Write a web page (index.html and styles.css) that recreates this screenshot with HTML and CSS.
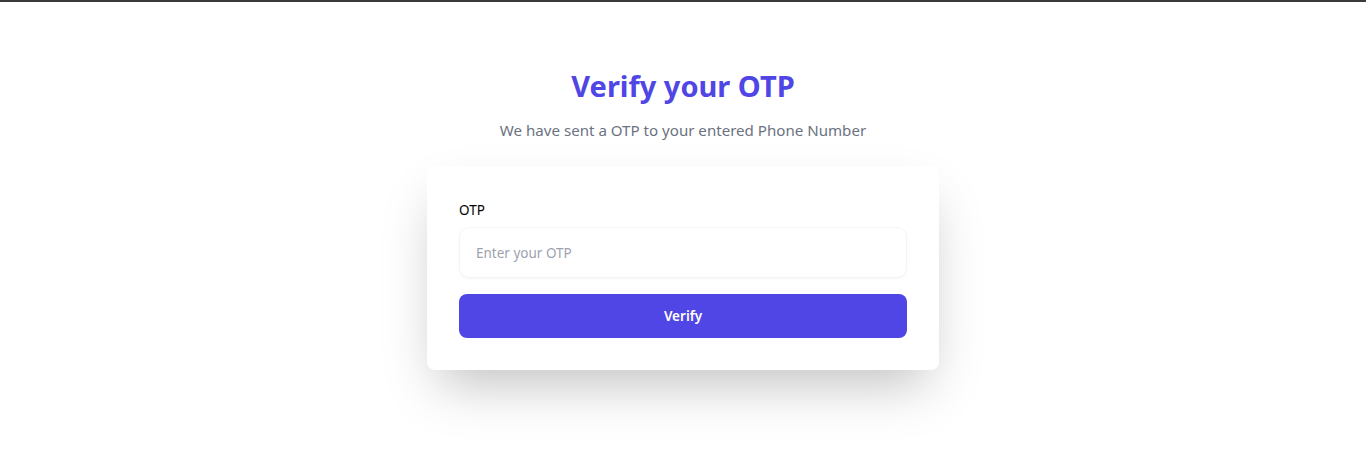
FILE: index.html
```html
<!DOCTYPE html>
<html lang="en">
<head>
<meta charset="utf-8">
<title>Verify your OTP</title>
<link rel="stylesheet" href="styles.css">
</head>
<body>
<main class="page">
  <h1 class="title">Verify your OTP</h1>
  <p class="subtitle">We have sent a OTP to your entered Phone Number</p>
  <form class="card">
    <label class="label" for="otp">OTP</label>
    <input class="input" id="otp" type="text" placeholder="Enter your OTP">
    <button class="button" type="button">Verify</button>
  </form>
</main>
</body>
</html>
```
FILE: styles.css
```css
* { box-sizing: border-box; }
html, body { margin: 0; padding: 0; background: #ffffff; }
body {
  border-top: 2px solid #3a3a3a;
  font-family: "Noto Sans", "Open Sans", sans-serif;
  height: 463px;
  overflow: hidden;
}
.page {
  display: flex;
  flex-direction: column;
  align-items: center;
  padding-top: 66px;
}
.title {
  margin: 0;
  font-size: 29px;
  line-height: 36px;
  font-weight: 700;
  color: #4f46e5;
}
.subtitle {
  margin: 14px 0 0;
  font-size: 15.1px;
  line-height: 24px;
  color: #6b7280;
}
.card {
  margin-top: 24px;
  width: 512px;
  background: #ffffff;
  border-radius: 8px;
  box-shadow: 0 25px 50px -12px rgba(0, 0, 0, 0.25);
  padding: 34px 32px 32px;
  display: flex;
  flex-direction: column;
}
.label {
  font-size: 13.5px;
  line-height: 20px;
  font-weight: 400;
  color: #000000;
}
.input {
  margin-top: 7px;
  height: 51px;
  border: 1px solid #f5f5f7;
  border-radius: 10px;
  box-shadow: 0 1px 2px rgba(0, 0, 0, 0.04);
  padding: 0 16px;
  font-family: inherit;
  font-size: 13.5px;
  color: #111827;
  outline: none;
}
.input::placeholder { color: #9ca3af; }
.button {
  margin-top: 16px;
  height: 44px;
  border: none;
  border-radius: 8px;
  background: #4f46e5;
  color: #ffffff;
  font-family: inherit;
  font-size: 13.5px;
  font-weight: 600;
}
```
